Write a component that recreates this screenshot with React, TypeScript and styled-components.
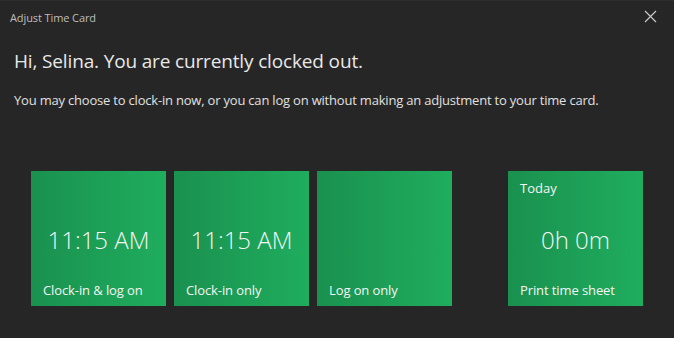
import React from 'react';
import styled, { createGlobalStyle } from 'styled-components';

const GlobalStyle = createGlobalStyle`
  html, body {
    margin: 0;
    padding: 0;
    background: #262626;
  }
  body {
    font-family: 'Open Sans', 'Noto Sans', sans-serif;
  }
`;

const Window = styled.div`
  width: 674px;
  height: 338px;
  box-sizing: border-box;
  background: #262626;
  border-top: 1px solid #2f2f2f;
  display: flex;
  flex-direction: column;
  overflow: hidden;
`;

const TitleBar = styled.div`
  height: 32px;
  display: flex;
  align-items: center;
  justify-content: space-between;
  padding: 0 16px 0 10px;
`;

const WindowTitle = styled.span`
  font-size: 11px;
  color: #bdbdbd;
  letter-spacing: -0.1px;
`;

const CloseButton = styled.button`
  background: none;
  border: none;
  padding: 0;
  width: 14px;
  height: 14px;
  display: flex;
  cursor: pointer;
`;

const Content = styled.div`
  padding: 15px 14px 0 14px;
  display: flex;
  flex-direction: column;
`;

const Heading = styled.h1`
  margin: 0;
  font-size: 19px;
  font-weight: 400;
  color: #e8e8e8;
  letter-spacing: -0.15px;
`;

const Subtitle = styled.p`
  margin: 17px 0 0 0;
  font-size: 13px;
  color: #e0e0e0;
  letter-spacing: -0.2px;
`;

const TileRow = styled.div`
  display: flex;
  gap: 8px;
  margin: 62px 0 0 31px;
`;

const Spacer = styled.div`
  width: 40px;
`;

const Tile = styled.button`
  width: 135px;
  height: 135px;
  border: none;
  padding: 2px 12px 4px 12px;
  box-sizing: border-box;
  background: linear-gradient(to right, #1a914f, #1fad5e);
  color: #f4f4f4;
  font-family: inherit;
  display: grid;
  grid-template-rows: 24px 1fr 24px;
  text-align: left;
  cursor: pointer;
`;

const TileTop = styled.span`
  font-size: 13px;
  align-self: end;
`;

const TileValue = styled.span`
  font-size: 24px;
  font-weight: 300;
  justify-self: center;
  align-self: center;
  padding-top: 4px;
`;

const TileLabel = styled.span`
  font-size: 13px;
  align-self: center;
  letter-spacing: -0.1px;
`;

type TileData = { top?: string; value?: string; label: string };

const tiles: TileData[] = [
  { value: '11:15 AM', label: 'Clock-in & log on' },
  { value: '11:15 AM', label: 'Clock-in only' },
  { label: 'Log on only' },
];

const summary: TileData = { top: 'Today', value: '0h 0m', label: 'Print time sheet' };

const ActionTile: React.FC<{ data: TileData }> = ({ data }) => (
  <Tile>
    <TileTop>{data.top}</TileTop>
    <TileValue>{data.value}</TileValue>
    <TileLabel>{data.label}</TileLabel>
  </Tile>
);

const App: React.FC = () => (
  <>
    <GlobalStyle />
    <Window>
      <TitleBar>
        <WindowTitle>Adjust Time Card</WindowTitle>
        <CloseButton aria-label="Close">
          <svg width="13" height="13" viewBox="0 0 13 13">
            <path d="M1 1 L12 12 M12 1 L1 12" stroke="#c8c8c8" strokeWidth="1.2" />
          </svg>
        </CloseButton>
      </TitleBar>
      <Content>
        <Heading>Hi, Selina. You are currently clocked out.</Heading>
        <Subtitle>You may choose to clock-in now, or you can log on without making an adjustment to your time card.</Subtitle>
      </Content>
      <TileRow>
        {tiles.map((t, i) => (
          <ActionTile key={i} data={t} />
        ))}
        <Spacer />
        <ActionTile data={summary} />
      </TileRow>
    </Window>
  </>
);

export default App;
